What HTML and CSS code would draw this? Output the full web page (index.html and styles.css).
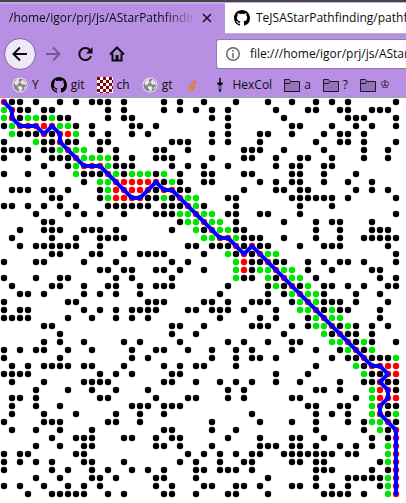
FILE: index.html
```html
<!DOCTYPE html>
<html lang="en">
<head>
<meta charset="utf-8">
<title>AStarPathfinding</title>
<link rel="stylesheet" href="styles.css">
</head>
<body>
<svg class="defs" aria-hidden="true">
  <symbol id="octocat" viewBox="0 0 16 16"><path d="M8 0C3.58 0 0 3.58 0 8c0 3.54 2.29 6.53 5.47 7.59.4.07.55-.17.55-.38 0-.19-.01-.82-.01-1.49-2.01.37-2.53-.49-2.69-.94-.09-.23-.48-.94-.82-1.13-.28-.15-.68-.52-.01-.53.63-.01 1.08.58 1.23.82.72 1.21 1.87.87 2.33.66.07-.52.28-.87.51-1.07-1.78-.2-3.64-.89-3.64-3.95 0-.87.31-1.59.82-2.15-.08-.2-.36-1.02.08-2.12 0 0 .67-.21 2.2.82.64-.18 1.32-.27 2-.27s1.36.09 2 .27c1.53-1.04 2.2-.82 2.2-.82.44 1.1.16 1.92.08 2.12.51.56.82 1.27.82 2.15 0 3.07-1.87 3.75-3.65 3.95.29.25.54.73.54 1.48 0 1.07-.01 1.93-.01 2.2 0 .21.15.46.55.38A8.01 8.01 0 0 0 16 8c0-4.42-3.58-8-8-8z"/></symbol>
  <symbol id="globe" viewBox="0 0 16 16"><circle cx="8" cy="8" r="7.5" fill="#eee"/><circle cx="8" cy="8" r="6.6" fill="#858585"/><path d="M2.2 5.5 5 2.3l2.6-.5L6.6 4l1.3 1.2-2 1.5-.6 1.8-1.8-.6zM8.3 5.2l2-2.4 2.2 1 1.6 3-.7 1.4-1.8-1.2-1.4.8zM6.8 9l2.4.3 1.6 1.6-1.4 3-1.6.6-.9-2.4-1.3-1.3zM12 10l1.8-.4-1.5 2.8z" fill="#e6e6e6"/></symbol>
  <symbol id="folder" viewBox="0 0 16 16"><path d="M.5 14.5v-12h5l1.5 2h8.5v10z" fill="#9272b8" stroke="#1d1624"/><path d="M.5 6.5h5l1.5-2" fill="none" stroke="#1d1624"/></symbol>
</svg>

<header class="chrome">
  <nav class="tabs" aria-label="Tabs">
    <div class="tab">
      <a class="tab-title" href="#grid">/home/igor/prj/js/AStarPathfinding</a>
      <button class="close" type="button" aria-label="Close tab"><svg viewBox="0 0 10 10"><path d="M1 1l8 8M9 1l-8 8"/></svg></button>
    </div>
    <div class="tab active">
      <svg class="icon"><use href="#octocat"/></svg>
      <a class="tab-title" href="#grid">TeJSAStarPathfinding/pathf</a>
    </div>
  </nav>

  <div class="toolbar">
    <button class="tool back" type="button" aria-label="Back"><svg viewBox="0 0 16 16"><path d="M15 8H1.5M8 1.5 1.5 8 8 14.5"/></svg></button>
    <button class="tool forward" type="button" aria-label="Forward"><svg viewBox="0 0 16 16"><path d="M1 8h13.5M8 1.5 14.5 8 8 14.5"/></svg></button>
    <button class="tool" type="button" aria-label="Reload"><svg viewBox="0 0 16 16"><path d="M13.2 4.6A6 6 0 1 0 14 10"/><path class="solid" d="M15.5 1v6.5H9z"/></svg></button>
    <button class="tool" type="button" aria-label="Home"><svg viewBox="0 0 16 16"><path d="M1 8.5 8 1.5l7 7M3.5 7.5v7h9v-7"/><path class="solid" d="M6.5 9h3v6h-3z"/></svg></button>
    <label class="url">
      <svg class="info" viewBox="0 0 14 14" aria-hidden="true"><circle cx="7" cy="7" r="6.3"/><path d="M7 6v5M7 3v1.7"/></svg>
      <input type="text" aria-label="Address" value="file:///home/igor/prj/js/AStarPathfinding/index.html">
    </label>
  </div>

  <nav class="bookmarks" aria-label="Bookmarks">
    <a href="#grid"><svg class="icon"><use href="#globe"/></svg>Y</a>
    <a href="#grid"><svg class="icon"><use href="#octocat"/></svg>git</a>
    <a href="#grid"><svg class="icon" viewBox="0 0 16 16"><path fill="#fff" d="M0 0h16v16H0z"/><path fill="#8b0000" d="M0 0h3v3H0zM6 0h3v3H6zM12 0h3v3h-3zM3 3h3v3H3zM9 3h3v3H9zM15 3h1v3h-1zM0 6h3v3H0zM6 6h3v3H6zM12 6h3v3h-3zM3 9h3v3H3zM9 9h3v3H9zM15 9h1v3h-1zM0 12h3v3H0zM6 12h3v3H6zM12 12h3v3h-3zM3 15h3v1H3zM9 15h3v1H9z"/></svg>ch</a>
    <a href="#grid"><svg class="icon"><use href="#globe"/></svg>gt</a>
    <a href="#grid" aria-label="Questions"><svg class="icon" viewBox="0 0 16 16" fill="none" stroke-width="1.3"><path d="M3 10v4.5h8.5V10" stroke="#a99bb0"/><path d="M4.5 12.5h5.5M4.7 10l5.4 1M5.5 7.2l5 2.3M7.2 4.5l4.2 3.5M9.5 2.2l3 4.6" stroke="#f2702a"/></svg></a>
    <a href="#grid"><svg class="icon" viewBox="0 0 16 16"><path d="M7.3 1Q8 0 8.7 1v4.5h2v2h-1.4V13L8 15.5 6.7 13V7.5H5.3v-2h2z"/><path d="M8 8.5v4" stroke="#ddd"/></svg>HexCol</a>
    <a href="#grid"><svg class="icon"><use href="#folder"/></svg>a</a>
    <a href="#grid"><svg class="icon"><use href="#folder"/></svg>?</a>
    <a href="#grid"><svg class="icon"><use href="#folder"/></svg><span class="king">♔</span></a>
  </nav>
</header>

<main>
  <svg id="grid" class="grid" viewBox="0 0 406 400" role="img" aria-label="Pathfinding grid"></svg>
</main>
<script src="grid.js"></script>
</body>
</html>
```

FILE: styles.css
```css
* {
  box-sizing: border-box;
}

body {
  margin: 0;
  background: #fff;
  color: #0c0c0d;
  font: 12px/20px "Open Sans", "Noto Sans", sans-serif;
  overflow: hidden;
}

a {
  color: inherit;
  text-decoration: none;
}

button {
  padding: 0;
  border: 0;
  background: none;
  color: inherit;
}

.defs {
  position: absolute;
  width: 0;
  height: 0;
}

.icon {
  flex: none;
  width: 16px;
  height: 16px;
}

.chrome {
  background: #b78fe3;
  border-top: 2px solid #484348;
  border-bottom: 1px solid #aaa0b4;
}

.tabs {
  display: flex;
  height: 32px;
  border-top: 2px solid #c6a9e8;
}

.tab {
  display: flex;
  align-items: center;
  flex: none;
  width: 225px;
  padding: 0 13px 2px 9px;
  white-space: nowrap;
}

.tab-title {
  flex: 1;
  min-width: 0;
  overflow: hidden;
}

.tab:not(.active) .tab-title {
  -webkit-mask-image: linear-gradient(to left, transparent, #000 32px);
  mask-image: linear-gradient(to left, transparent, #000 32px);
}

.active {
  flex: 1;
  gap: 6px;
  min-width: 0;
  margin-top: -1px;
  padding: 0 0 0 9px;
  background: #fff;
  border-bottom: 1px solid #b9b3be;
}

.close {
  display: flex;
  margin-left: 6px;
}

.close svg {
  width: 10px;
  height: 10px;
  fill: none;
  stroke: #17131c;
  stroke-width: 1.5;
}

.toolbar {
  display: flex;
  align-items: center;
  height: 39px;
  padding-left: 4px;
}

.tool {
  display: flex;
  align-items: center;
  justify-content: center;
  flex: none;
  width: 32px;
  height: 32px;
}

.tool svg {
  width: 16px;
  height: 16px;
  fill: none;
  stroke: currentColor;
  stroke-width: 2;
}

.tool .solid {
  fill: currentColor;
  stroke: none;
}

.back {
  margin-right: 1px;
  border: 1px solid #7f659e;
  border-radius: 50%;
  background: #efe8f8;
}

.forward {
  color: #745a92;
}

.url {
  display: flex;
  align-items: center;
  flex: 1;
  gap: 10px;
  min-width: 0;
  height: 30px;
  margin-left: 83px;
  padding-left: 9px;
  border: 1px solid #9577b8;
  border-right: 0;
  border-radius: 3px 0 0 3px;
  background: #fff;
}

.info {
  flex: none;
  width: 14px;
  height: 14px;
  fill: none;
  stroke: #636363;
  stroke-width: 1.4;
}

.url input {
  flex: 1;
  min-width: 0;
  padding: 0;
  border: 0;
  outline: 0;
  background: none;
  color: inherit;
  font: inherit;
}

.bookmarks {
  display: flex;
  gap: 12px;
  height: 24px;
  padding: 0 0 1px 12px;
  overflow: hidden;
  white-space: nowrap;
}

.bookmarks a {
  display: flex;
  align-items: center;
  gap: 4px;
}

.king {
  font: 11px/20px "DejaVu Sans", sans-serif;
}

.grid {
  display: block;
  width: 100%;
}
```

FILE: grid.js
```js
// One string per row: column numbers of the left half, then of the right half.
// A bare number is a wall, "g" an open-set cell, "r" a closed-set cell.
const HALF = 25;
const CELL = 8;
const COLORS = { g: "#00e600", r: "#ff0000" };

const rows = `
r0 1 2 4 7 9 11 12 13 15 20 22|0 4 8 11 14 16 18 24
g0 r1 2 3 5 6 13 15 20 22 24|1 3 9 13 14 17 18 21 22 23
g0 r1 2 g3 g4 5 g6 7 8 13 15 16|1 3 10 18 19 20 24
0 g1 r2 r3 r4 r5 r6 g7 g8 9 11 16 17 19|3 11 12 16 19 21 24
g1 2 3 4 r5 6 r7 r8 g9 11 13 16 18|1 3 7 8 11 15 17 18 20
0 g4 5 6 r7 8 9 12 13 21 22 23|1 3 7 14 17 18 20 24
0 1 2 3 5 6 g7 r8 g9 g10 12 14 19 20 23|5 6 7 10 15 20 23
0 3 6 7 8 r9 g10 g11 g12 g13 14 16 19 20 21|1 5 6 9 12 13 16 20 23
5 8 g9 r10 r11 r12 g13 14 15 16 21 23|0 3 9 11 12 15 16
0 3 6 g9 10 11 12 r13 g14 15 g16 g17 g18 19 g20 22|0 1 5 6 11 12 15 19
10 g12 g13 r14 r15 r16 r17 r18 r19 20 g21 22|0 1 7 9 11 12 15 18 21
1 2 3 5 6 8 12 g13 r14 r15 r16 r17 r18 19 r20 r21 22 23|5 9 10 12 13 19 21 23
6 7 12 g13 r14 r15 r16 r17 18 19 g20 21 r22 g23 g24|3 4 11 12 13 14 15 16 18 24
0 1 3 5 7 9 13 14 15 16 17 18 20 21 22 r23 g24|0 4 12 16
4 8 10 12 15 19 20 21 g22 g23 r24|g0 g1 3 4 7 8 12 24
5 6 22 g23 g24|r0 g1 g2 4 10 14 16 17 21
2 5 6 7 10 11 12 14 21 g24|0 r1 g2 g3 4 5 14 17 21 22 23
1 6 9 12 13 14 15|g0 g1 r2 r3 g4 5 6 7 10 14 17 20 21 22 23 24
2 4 5 6 7 8 9 12 23 24|1 2 3 r4 5 r6 7 8 12 15 16 17 23
6 7 11 12 15 17 18 19 20|0 g3 4 r5 6 r7 g8 g9 24
0 4 5 10 14 21 23|g4 r5 6 7 r8 9 10 13 15 17 18 20 24
12 13 15 16 19 20 22|0 g4 r5 6 g7 g8 r9 g10 g11 13 16 21 22
0 4 7 8 14 16 21|g4 5 6 g8 9 r10 g11 g12 14 22 24
1 6 7 10 13 14 17 19 20 21|3 8 g9 10 r11 12 g13 15 16 18 20 23 24
2 3 5 10 12 14 17|2 8 10 g11 r12 g13 g14 15 19 22
0 8 9 18 19 20|0 1 3 6 7 8 11 g12 r13 g14 15 16 17 19 23
0 2 3 10 12 14 16 17 18 19 23 24|1 2 3 5 9 g12 g13 r14 15 g16 17 18 22
0 1 2 3 8 11 14 16 18|2 7 9 13 g14 r15 g16 g17 22
5 6 21 22|0 6 7 8 11 13 g14 g15 r16 17 g18 19 21 23
7 21 24|10 g15 16 r17 18 19 21
5 7 10 15 17 22|3 5 8 11 12 g16 g17 r18 19 g20 21 24
0 2 4 5 8 11 16 19 20 23|1 4 6 11 14 17 g18 r19 20 g21
0 7 16 18|1 4 6 7 9 16 18 19 r20 21 22 23 g24
1 3 5 6 7 8 10 11 15 20 22 24|0 4 14 g19 20 r21 r22 r23 r24
0 1 2 3 12 14 16 21 22|9 13 g20 21 22 r23 r24
1 5 10 11 12 13 20 21 24|2 4 6 9 12 17 20 21 r22 23 24
4 8 11 14 18|3 5 14 15 17 g21 r22 r23 24
1 2 4 12 13 19 23 24|3 5 11 12 19 g21 r22 r23 r24
1 4 7 16 17 18 20 21 22|13 14 17 18 g21 r22 23 24
1 5 9 14 17 20|6 14 16 18 g21 r22 23 g24
0 5 6 7 13 14 17|1 7 11 14 18 20 g21 g22 r23 24
1 4 7 11 20 21|1 4 14 20 g22 23 r24
6 9 10 11 15 16 19 21 22|3 7 11 12 15 21 23 r24
4 7 10 11 19 20 22|1 7 8 9 11 12 14 17 19 21 g23 r24
0 2 3 9 10 23|0 2 4 6 7 10 11 12 13 14 15 16 18 19 g23 r24
0 2 4 6 10 11 15 22 24|2 5 6 11 12 14 15 22 g23 r24
0 6 8 11 13 16 18 20 24|0 2 3 4 6 14 15 16 21 23 r24
4 7 11 12 14 19 20 24|8 14 18 19 20 21 22 g23 r24
0 2 5 8 10 12 19 21|0 1 4 5 7 11 12 14 16 18 22 g23 r24
3 6 7 8 9 10 13 15 20 21 24|3 4 8 15 16 17 18 20 g23 r24
`.trim().split("\n");

const path = [
  [0, 0], [1, 1], [1, 2], [2, 3], [4, 3], [5, 4], [6, 3], [7, 4], [7, 5],
  [10, 8], [12, 8], [16, 12], [17, 12], [19, 10], [20, 11], [21, 11],
  [27, 17], [28, 17], [30, 19], [31, 18], [46, 33], [47, 33], [48, 34],
  [47, 35], [48, 36], [48, 37], [47, 38], [47, 39], [49, 41], [49, 49],
];

const center = (n) => n * CELL + CELL / 2;

const grid = document.getElementById("grid");

function add(name, attributes) {
  const node = document.createElementNS("http://www.w3.org/2000/svg", name);
  for (const key in attributes) node.setAttribute(key, attributes[key]);
  grid.append(node);
}

rows.forEach((row, y) => {
  row.split("|").forEach((half, side) => {
    half.split(" ").forEach((cell) => {
      const x = Number(cell.replace(/\D/, "")) + side * HALF;
      add("circle", { cx: center(x), cy: center(y), r: 3.2, fill: COLORS[cell[0]] || "#000" });
    });
  });
});

add("polyline", {
  points: path.map(([x, y]) => `${center(x)},${center(y)}`).join(" "),
  fill: "none",
  stroke: "#0000ff",
  "stroke-width": 4,
  "stroke-linecap": "round",
});
```
